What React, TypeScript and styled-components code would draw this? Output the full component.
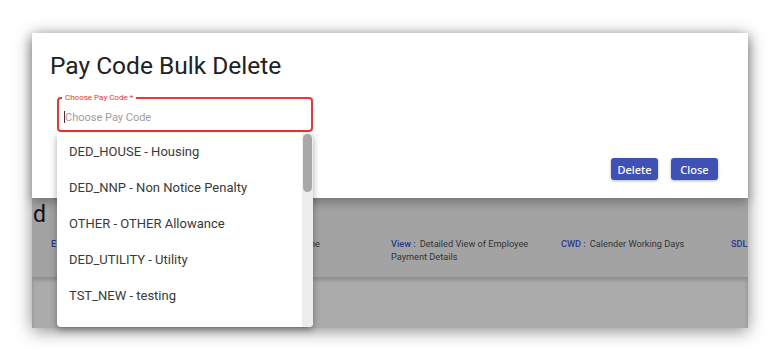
import React from 'react';
import styled, { createGlobalStyle } from 'styled-components';

const GlobalStyle = createGlobalStyle`
  html, body {
    margin: 0;
    padding: 0;
    background: #ffffff;
    font-family: Roboto, 'Noto Sans', Arial, sans-serif;
  }
  * { box-sizing: border-box; }
`;

const Page = styled.div`
  width: 780px;
  height: 361px;
  padding: 33px 32px 0;
`;

const Frame = styled.div`
  position: relative;
  width: 716px;
  height: 295px;
  display: flex;
  flex-direction: column;
  box-shadow: 0 3px 16px rgba(0, 0, 0, 0.45);
`;

const Dialog = styled.div`
  position: relative;
  z-index: 2;
  height: 165px;
  flex-shrink: 0;
  background: #fff;
  padding: 17px 30px 0 18px;
  box-shadow: 0 4px 10px rgba(0, 0, 0, 0.3);
  display: flex;
  flex-direction: column;
`;

const Title = styled.h2`
  margin: 0;
  font-size: 24.5px;
  font-weight: 400;
  line-height: 32px;
  color: #212121;
`;

const Field = styled.div`
  position: relative;
  margin: 15px 0 0 7px;
  width: 256px;
  height: 35px;
  border: 2px solid #e53935;
  border-radius: 4px;
  display: flex;
  align-items: center;
  padding-left: 5px;
  padding-top: 5px;
`;

const FieldLabel = styled.span`
  position: absolute;
  top: -6px;
  left: 3px;
  padding: 0 3px;
  background: #fff;
  font-size: 8px;
  line-height: 10px;
  color: #e53935;
`;

const Caret = styled.span`
  width: 1px;
  height: 12px;
  background: #5a2a2a;
`;

const Placeholder = styled.span`
  font-size: 11px;
  color: #9e9e9e;
`;

const Actions = styled.div`
  display: flex;
  justify-content: flex-end;
  gap: 13px;
  margin-top: 26px;
`;

const Button = styled.button`
  width: 47px;
  height: 22px;
  border: none;
  border-radius: 3px;
  background: #3f51b5;
  color: #fff;
  font-family: 'Noto Sans', Roboto, sans-serif;
  font-size: 11px;
  font-weight: 500;
  box-shadow: 0 1px 3px rgba(0, 0, 0, 0.3);
  padding: 0;
`;

const Backdrop = styled.div`
  flex: 1;
  display: flex;
  flex-direction: column;
`;

const Card = styled.div`
  height: 79px;
  flex-shrink: 0;
  overflow: hidden;
  background: #a3a3a3;
  padding: 5px 0 0 1px;
`;

const Heading = styled.div`
  font-size: 23px;
  line-height: 24px;
  color: #111;
`;

const Legend = styled.div`
  display: flex;
  margin: 10px 0 0 18px;
`;

const LegendItem = styled.div<{ $trail?: boolean }>`
  width: 170px;
  flex-shrink: 0;
  padding-right: ${p => (p.$trail ? '71px' : '26px')};
  text-align: ${p => (p.$trail ? 'right' : 'left')};
  font-size: 9.2px;
  line-height: 13px;
  color: #333;
`;

const LegendKey = styled.span`
  color: #2c3a8c;
  font-weight: 500;
  margin-right: 4px;
`;

const Lower = styled.div`
  flex: 1;
  background: #ababab;
  box-shadow: inset 0 3px 4px rgba(0, 0, 0, 0.18);
`;

const Menu = styled.div`
  position: absolute;
  z-index: 3;
  left: 25px;
  top: 100px;
  width: 256px;
  height: 194px;
  background: #fff;
  border-radius: 0 0 4px 4px;
  box-shadow: 0 3px 7px rgba(0, 0, 0, 0.35);
  display: flex;
  overflow: hidden;
`;

const Options = styled.div`
  flex: 1;
`;

const Option = styled.div`
  height: 36px;
  display: flex;
  align-items: center;
  padding-left: 12px;
  font-size: 13px;
  color: #3a3a3a;
`;

const Track = styled.div`
  width: 11px;
  background: #ededed;
  padding: 1px 1px 0;
`;

const Thumb = styled.div`
  height: 58px;
  border-radius: 5px;
  background: #a8a8a8;
`;

const options = [
  'DED_HOUSE - Housing',
  'DED_NNP - Non Notice Penalty',
  'OTHER - OTHER Allowance',
  'DED_UTILITY - Utility',
  'TST_NEW - testing',
];

// only the parts of the legend that are not covered by the open menu
const legend = [
  { key: 'E', value: '' },
  { key: '', value: 'ne', trail: true },
  { key: 'View :', value: 'Detailed View of Employee Payment Details' },
  { key: 'CWD :', value: 'Calender Working Days' },
  { key: 'SDL', value: '' },
];

const App = () => (
  <>
    <GlobalStyle />
    <Page>
      <Frame>
        <Dialog>
          <Title>Pay Code Bulk Delete</Title>
          <Field>
            <FieldLabel>Choose Pay Code *</FieldLabel>
            <Caret />
            <Placeholder>Choose Pay Code</Placeholder>
          </Field>
          <Actions>
            <Button>Delete</Button>
            <Button>Close</Button>
          </Actions>
        </Dialog>
        <Backdrop>
          <Card>
            <Heading>d</Heading>
            <Legend>
              {legend.map((item, i) => (
                <LegendItem key={i} $trail={item.trail}>
                  {item.key && <LegendKey>{item.key}</LegendKey>}
                  {item.value}
                </LegendItem>
              ))}
            </Legend>
          </Card>
          <Lower />
        </Backdrop>
        <Menu>
          <Options>
            {options.map((o, i) => (
              <Option key={i}>{o}</Option>
            ))}
          </Options>
          <Track>
            <Thumb />
          </Track>
        </Menu>
      </Frame>
    </Page>
  </>
);

export default App;
